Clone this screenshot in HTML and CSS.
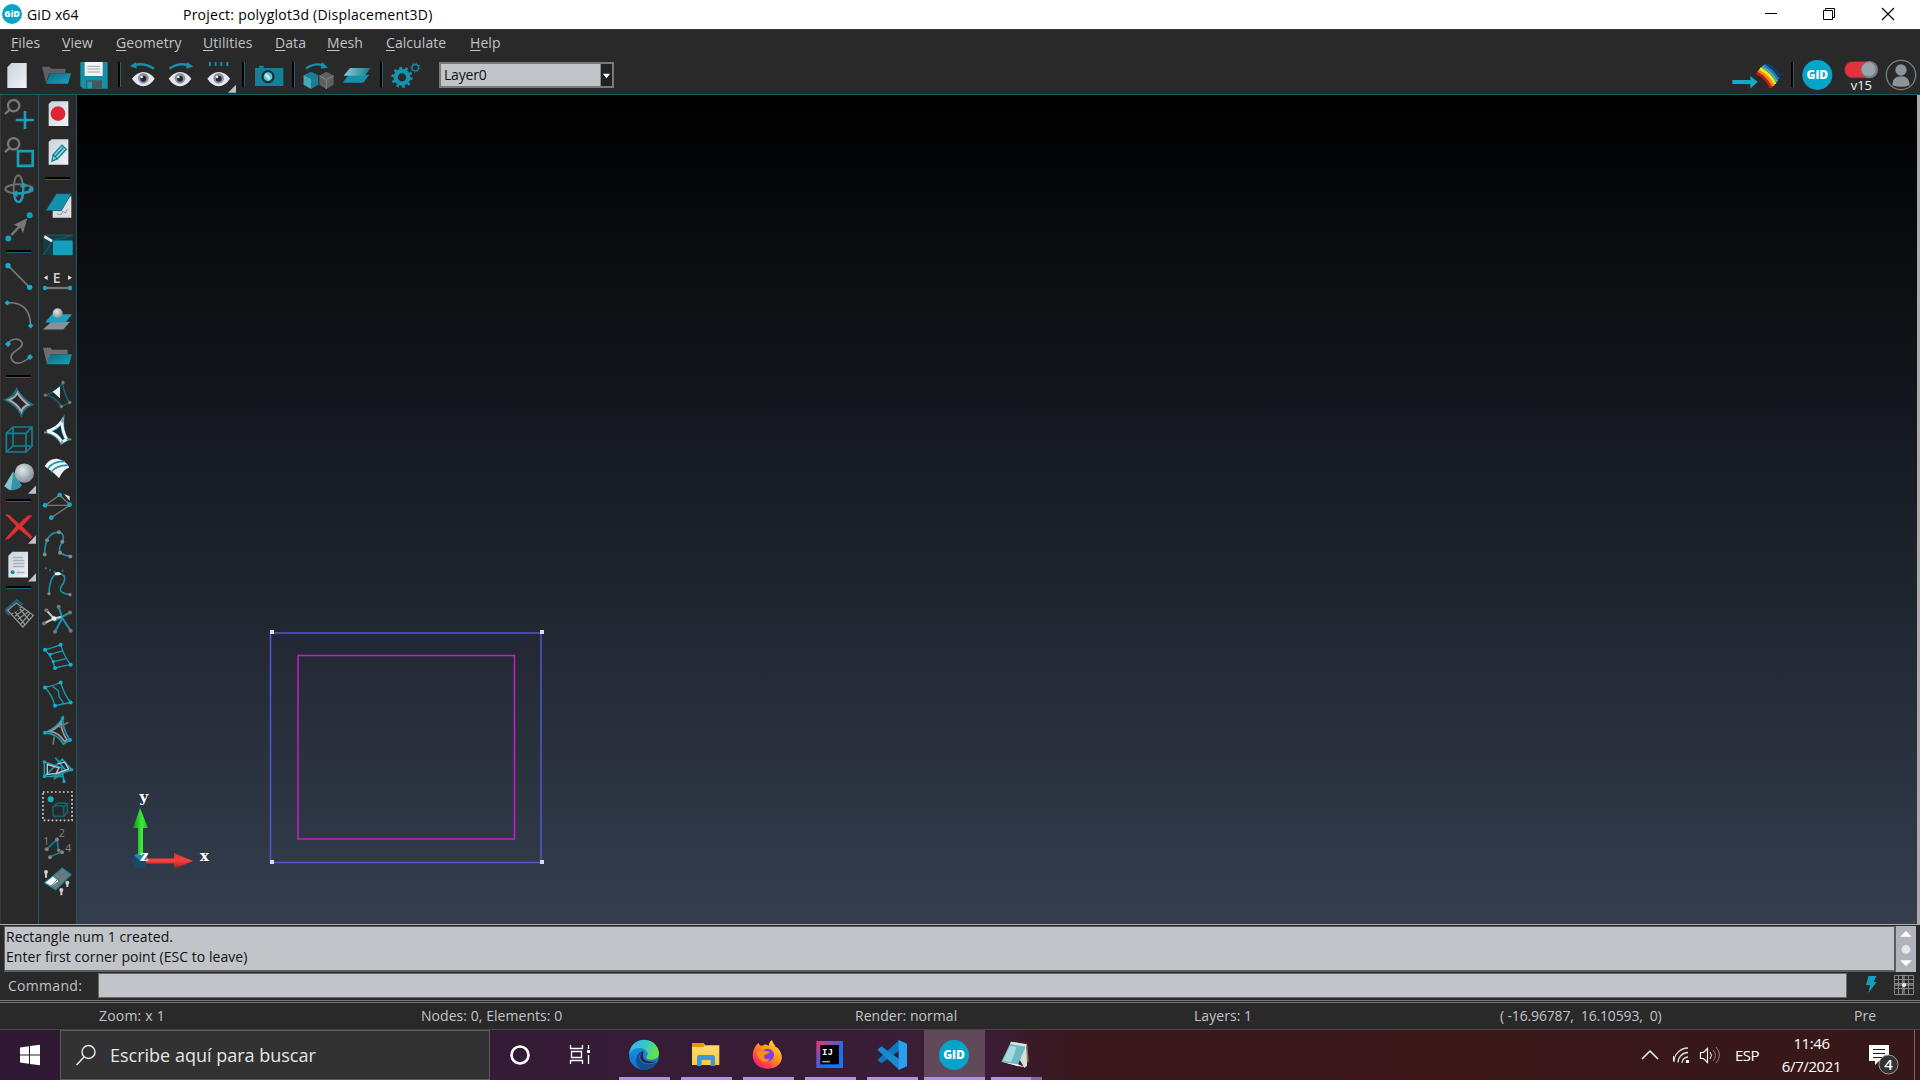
FILE: index.html
```html
<!DOCTYPE html>
<html lang="es">
<head>
<meta charset="utf-8">
<title>GiD x64</title>
<link rel="stylesheet" href="styles.css">
</head>
<body>
<svg class="defs" aria-hidden="true">
  <defs>
    <linearGradient id="paper" x1="0" y1="0" x2="1" y2="1"><stop offset="0" stop-color="#c9d3db"/><stop offset="1" stop-color="#eef3f7"/></linearGradient>
    <linearGradient id="teal" x1="0" y1="0" x2="1" y2="1"><stop offset="0" stop-color="#0b6a80"/><stop offset="1" stop-color="#1aa5c0"/></linearGradient>
    <linearGradient id="tealLight" x1="0" y1="0" x2="1" y2="0"><stop offset="0" stop-color="#8ccfdd"/><stop offset="1" stop-color="#1b7688"/></linearGradient>
    <radialGradient id="ball" cx=".4" cy=".35" r=".7"><stop offset="0" stop-color="#e0e8ec"/><stop offset="1" stop-color="#7f8c92"/></radialGradient>
    <linearGradient id="edgeA" x1="0" y1="0" x2="1" y2=".4"><stop offset="0" stop-color="#2db5ea"/><stop offset=".55" stop-color="#35c8c8"/><stop offset="1" stop-color="#66e04c"/></linearGradient>
    <linearGradient id="edgeB" x1="0" y1="0" x2="0" y2="1"><stop offset="0" stop-color="#199be6"/><stop offset="1" stop-color="#0d6ecb"/></linearGradient>
    <linearGradient id="fold" x1="0" y1="0" x2="0" y2="1"><stop offset="0" stop-color="#ffde72"/><stop offset="1" stop-color="#ffc93c"/></linearGradient>
    <linearGradient id="fox" x1="1" y1="0" x2=".2" y2="1"><stop offset="0" stop-color="#fff04a"/><stop offset=".45" stop-color="#ff9a1f"/><stop offset=".8" stop-color="#ff3f4a"/><stop offset="1" stop-color="#f5156c"/></linearGradient>
    <linearGradient id="ij" x1="0" y1="0" x2="1" y2="1"><stop offset="0" stop-color="#f0356b"/><stop offset=".4" stop-color="#6a55c8"/><stop offset=".6" stop-color="#1470f0"/><stop offset="1" stop-color="#0f7cff"/></linearGradient>
    <linearGradient id="redArrow" x1="0" y1="0" x2="0" y2="1"><stop offset="0" stop-color="#c33"/><stop offset=".45" stop-color="#ff4040"/><stop offset="1" stop-color="#8a1f22"/></linearGradient>
    <linearGradient id="greenArrow" x1="0" y1="0" x2="1" y2="0"><stop offset="0" stop-color="#178a1c"/><stop offset=".6" stop-color="#3cf03c"/><stop offset="1" stop-color="#22b022"/></linearGradient>
    <g id="eye"><path d="M-34 0Q-18-20 0-20Q20-20 34 0Q20 22 0 23Q-20 22-34 0z" fill="#e4e7ef"/><circle r="16" cy="-1" fill="#8b93a0"/><circle r="9" fill="#23272e"/><circle r="4" cx="-5" cy="-5" fill="#eee"/></g>
  </defs>
</svg>

<header class="titlebar">
  <svg class="app-logo" viewBox="0 0 20 20"><circle cx="10" cy="10" r="10" fill="#04a5c8"/><text x="10" y="13" text-anchor="middle" font-size="8.500" class="gid-text">GiD</text></svg>
  <span class="app-name">GiD x64</span>
  <span class="project">Project: polyglot3d (Displacement3D)</span>
  <span class="window-buttons">
    <svg viewBox="1742 0 58 29"><path d="M1765 13.5h12" stroke="#000"/></svg>
    <svg viewBox="1800 0 58 29"><path d="M1823.500 10.500h9v9h-9zM1825.500 10.500v-2h9v9h-2" fill="none" stroke="#000"/></svg>
    <svg viewBox="1858 0 62 29"><path d="M1882 8l12 12M1894 8l-12 12" stroke="#000" stroke-width="1.200"/></svg>
  </span>
</header>

<nav class="menubar">
  <span class="m-files"><u>F</u>iles</span><span class="m-view"><u>V</u>iew</span><span class="m-geometry"><u>G</u>eometry</span><span class="m-utilities"><u>U</u>tilities</span><span class="m-data"><u>D</u>ata</span><span class="m-mesh"><u>M</u>esh</span><span class="m-calculate"><u>C</u>alculate</span><span class="m-help"><u>H</u>elp</span>
</nav>

<div class="toolbar">
  <svg viewBox="0 21 114 108"><path d="M22 52l12-13H80V114H22z" fill="url(#paper)"/></svg>
  <svg viewBox="114 21 114 108"><path d="M126 50h22l6 6h42v14h-48l-10 30z" fill="#5b6064"/><path d="M150 70h63l-9 31h-66z" fill="url(#teal)"/></svg>
  <svg viewBox="228 21 114 108"><path d="M241 36h82v80h-74l-8-8z" fill="#1590a8"/><path d="M254 36h54v42h-54z" fill="#f2f4f5"/><path d="M262 49h38M262 57h38M262 66h38" stroke="#9ba3a8" stroke-width="3"/><path d="M258 91h48v25h-48z" fill="#4b565b"/><path d="M262 95h14v20h-14z" fill="#13a2c0"/></svg>
  <i class="vsep"></i>
  <svg viewBox="372 21 114 108"><path d="M402 46Q430 36 462 56" fill="none" stroke="#1591aa" stroke-width="7"/><path d="M390 48l18-12 2 20z" fill="#1591aa"/><use href="#eye" x="430" y="86"/></svg>
  <svg viewBox="486 21 114 108"><path d="M508 56Q536 36 567 46" fill="none" stroke="#1591aa" stroke-width="7"/><path d="M580 50l-18-14-4 20z" fill="#1591aa"/><use href="#eye" x="540" y="86"/></svg>
  <svg viewBox="600 21 114 108"><path d="M630 36v12M647 36v12M664 36v12M682 36v12" stroke="#1591aa" stroke-width="6"/><use href="#eye" x="656" y="86"/><path d="M708 104v24h-24z" fill="#c0c0c6"/></svg>
  <i class="vsep"></i>
  <svg viewBox="750 21 114 108"><path d="M765 54h12v-7h14v7h59v54h-85z" fill="#158098"/><circle cx="804" cy="80" r="20" fill="#15323b"/><circle cx="804" cy="80" r="13" fill="#69c2d4"/><path d="M797 73l12 14" stroke="#d6f2f7" stroke-width="6"/></svg>
  <i class="vsep"></i>
  <svg viewBox="900 21 114 108"><path d="M918 56Q944 36 972 47" fill="none" stroke="#1591aa" stroke-width="7"/><path d="M984 53l-18-17-4 20z" fill="#1591aa"/><path d="M911 76l22-11 22 11v28l-22 13-22-13z" fill="#1c7d92"/><path d="M911 76l22 12v28l-22-12z" fill="#49a9bc"/><path d="M958 77l21-12 22 12v27l-22 13-21-13z" fill="#5e6063"/><path d="M958 77l21 12 22-12M979 89v28" stroke="#858789" stroke-width="3" fill="none"/></svg>
  <svg viewBox="1014 21 114 108"><path d="M1046 74h62l-18 24h-62z" fill="#1490ab"/><path d="M1050 54h62l-18 23h-63z" fill="url(#tealLight)"/></svg>
  <i class="vsep"></i>
  <svg viewBox="1161 21 114 108"><circle cx="1206" cy="82" r="19" fill="none" stroke="#1593ae" stroke-width="13"/><circle cx="1206" cy="82" r="28" fill="none" stroke="#1593ae" stroke-width="8" stroke-dasharray="8 9.600"/><circle cx="1246" cy="53" r="10" fill="none" stroke="#1780a0" stroke-width="5"/><circle cx="1246" cy="53" r="14" fill="none" stroke="#1780a0" stroke-width="3" stroke-dasharray="4 7"/></svg>
  <div class="combo"><span>Layer0</span><b><svg viewBox="0 0 10 10"><path d="M1 3h8l-4 5z" fill="#fff"/></svg></b></div>
  <div class="toolbar-right">
    <svg class="w54" viewBox="90 171 162 108"><path d="M97 240h54v-12l22 17-22 21v-14H97z" fill="#16a9c6"/><g fill="none" stroke-width="9"><path d="M170 218q30 15 44 46" stroke="#c61a15"/><path d="M175 211q30 16 45 47" stroke="#f78b12"/><path d="M180 205q31 17 46 47" stroke="#f5e426"/><path d="M187 199q30 18 44 46" stroke="#49b9a4"/><path d="M193 195q28 17 42 43" stroke="#1c79bd"/><path d="M200 191q26 16 39 40" stroke="#123a66"/></g></svg>
    <i class="vsep"></i>
    <svg class="w34" viewBox="300 171 102 108"><circle cx="352" cy="225" r="45" fill="#04a5c8"/><text x="352" y="238" text-anchor="middle" font-size="36" class="gid-text">GiD</text></svg>
    <svg class="w38" viewBox="426 171 114 108"><rect x="433" y="184" width="102" height="51" rx="25" fill="#6b3c40"/><rect x="435" y="186" width="90" height="46" rx="23" fill="#e5313b"/><circle cx="508" cy="209" r="26" fill="#737c83"/><circle cx="506" cy="208" r="21" fill="#9aa4ac"/><text x="484" y="269" text-anchor="middle" class="version">v15</text></svg>
    <svg class="w34" viewBox="552 171 102 108"><circle cx="603" cy="225" r="44" fill="none" stroke="#777e83" stroke-width="4"/><circle cx="603" cy="210" r="17" fill="#8b959c"/><path d="M577 256q0-27 26-27t26 27q-26 9-52 0z" fill="#8b959c"/></svg>
  </div>
</div>

<main class="workspace">
  <aside class="tools">
    <svg viewBox="0 18 114 112.500"><circle cx="41" cy="47" r="17" fill="none" stroke="#777" stroke-width="7"/><path d="M29 59L15 72" stroke="#777" stroke-width="7"/><path d="M47 90h55M75 63v54" stroke="#169fbb" stroke-width="8"/></svg>
    <svg viewBox="0 130.500 114 112.500"><circle cx="41" cy="160" r="17" fill="none" stroke="#777" stroke-width="7"/><path d="M29 172L15 185" stroke="#777" stroke-width="7"/><path d="M54 182h44v44H54z" fill="none" stroke="#169fbb" stroke-width="8"/></svg>
    <svg viewBox="0 243 114 112.500"><g fill="none" stroke-width="6"><ellipse cx="57" cy="297" rx="41" ry="14" stroke="#6b6f71"/><ellipse cx="55" cy="296" rx="14" ry="40" stroke="#6b6f71"/><path d="M98 294q-3 14-54 17M70 290q2 46-15 46q-10 0-12-20" stroke="#169fbb"/></g><path d="M36 311l16-11v22zM70 277l-11 15h22zM100 306l-2-18-14 10z" fill="#169fbb"/></svg>
    <svg viewBox="0 355.500 114 112.500"><path d="M34 434l28-30" stroke="#777" stroke-width="7"/><path d="M82 383l-41 20 20 8 8 17z" fill="#777"/><circle cx="25" cy="444" r="9" fill="#169fbb"/><circle cx="89" cy="374" r="9" fill="#169fbb"/></svg>
    <i class="hsep s12"></i>
    <svg viewBox="0 504 114 112.500"><path d="M24 527l65 65" stroke="#777" stroke-width="5"/><circle cx="24" cy="527" r="8" fill="#16b0cf"/><circle cx="89" cy="592" r="8" fill="#16b0cf"/></svg>
    <svg viewBox="0 16.500 114 112.500"><path d="M22 37q68-4 70 69" fill="none" stroke="#777" stroke-width="5"/><path d="M22 29l8 8-8 8-8-8zM92 98l8 8-8 8-8-8z" fill="#16b0cf"/></svg>
    <svg viewBox="0 129 114 112.500"><path d="M24 162C34 142 60 145 66 158C73 177 26 184 34 205C43 230 70 219 90 201" fill="none" stroke="#777" stroke-width="5"/><path d="M24 153l9 9-9 9-9-9zM90 192l9 9-9 9-9-9z" fill="#16b0cf"/></svg>
    <i class="hsep s12"></i>
    <svg viewBox="0 277.500 114 112.500"><path d="M16 328q24-8 34-32q16 28 46 46q-24 8-32 31q-12-30-48-45z" fill="none" stroke="#15788c" stroke-width="6"/><path d="M27 328q18-6 25-21q15 23 33 35q-16 6-21 20q-12-22-37-34z" fill="none" stroke="#b7a5a6" stroke-width="6"/></svg>
    <svg viewBox="0 390 114 112.500"><path d="M19 430h59v56H19zM39 411h57v57H39zM19 430l20-19M78 430l18-19M19 486l20-18M78 486l18-18" fill="none" stroke="#177f94" stroke-width="5"/></svg>
    <svg viewBox="0 502.500 114 112.500"><path d="M40 543l26 42q-12 16-39 14l-14-12z" fill="#3593a7"/><path d="M40 543l-27 44 20 12z" fill="#8ac3cf"/><circle cx="73" cy="548" r="29" fill="url(#ball)"/><path d="M108 585v25H84z" fill="#c0c0c6"/></svg>
    <i class="hsep s12"></i>
    <svg viewBox="0 51 114 112.500"><path d="M18 74l10 2 29 27 26-25 12-1-30 32 30 30-3 6-35-29-31 30-9 1 33-39z" fill="#dc2f36" stroke="#dc2f36" stroke-width="3"/><path d="M108 136v25H84z" fill="#c0c0c6"/></svg>
    <svg viewBox="0 163.500 114 112.500"><path d="M25 196l12-12h47v77H25z" fill="url(#paper)"/><path d="M39 201h31M39 210h34M39 219h34M39 228h34M50 246h23" stroke="#a9b2b8" stroke-width="4"/><circle cx="38" cy="245" r="6" fill="#138ca8"/><path d="M108 248v25H84z" fill="#c0c0c6"/></svg>
    <i class="hsep s12"></i>
    <svg viewBox="0 312 114 112.500"><path d="M16 361l34-31 18 14M16 361l12 14" fill="none" stroke="#166679" stroke-width="6"/><path d="M23 361l26-22 51 37-31 35zM36 371l30-21M45 379l30-23M54 388l33-24M63 401l27-31M39 357l35 46M55 351l34 41" fill="none" stroke="#919495" stroke-width="4"/><path d="M28 361l20-16 14 10-22 15z" fill="#292929"/></svg>
  </aside>
  <aside class="tools second">
    <svg viewBox="117 18 114 112.500"><path d="M146 42l9-8h50v74h-59z" fill="url(#paper)"/><circle cx="174" cy="71" r="22" fill="#dd2634"/></svg>
    <svg viewBox="117 130.500 114 112.500"><path d="M146 154l9-8h50v77h-59z" fill="url(#paper)"/><path d="M156 212l3-19 27-29 13 12-27 29zM160 193l11 11M166 197l24-25" fill="#8fcfdd" stroke="#12829b" stroke-width="4"/></svg>
    <i class="hsep s16"></i>
    <svg viewBox="117 291 114 112.500"><path d="M158 341l56-23v65h-56z" fill="#d9dfe5"/><path d="M171 372l12 2 5-10 8 5 6-11" fill="none" stroke="#8b959d" stroke-width="3"/><path d="M169 311h45l-30 51h-47z" fill="#1590aa" stroke="#0a4856" stroke-width="2"/></svg>
    <svg viewBox="117 403.500 114 112.500"><path d="M130 434h88v60h-88z" fill="#173c45"/><path d="M159 450h59v44h-59z" fill="#13a0bd"/><path d="M130 434h88M159 450l59-16M130 494l29-44" stroke="#18606f" stroke-width="3"/><path d="M133 438l23 14" stroke="#e8ecee" stroke-width="8"/></svg>
    <svg viewBox="117 516 114 112.500"><path d="M131 563l12-7v14zM216 563l-12-7v14z" fill="#ddd"/><text x="170" y="578" text-anchor="middle" class="icon-letter">E</text><path d="M135 594h75" stroke="#777" stroke-width="7"/><circle cx="135" cy="594" r="7" fill="#16a5c2"/><circle cx="210" cy="594" r="7" fill="#16a5c2"/></svg>
    <svg viewBox="117 28.500 114 112.500"><path d="M154 94h56l-20 23h-61z" fill="#8a9196"/><path d="M156 71h60l-20 25h-61z" fill="#18a3bf"/><circle cx="173" cy="68" r="15" fill="url(#ball)"/></svg>
    <svg viewBox="117 141 114 112.500"><path d="M129 173h22l6 6h46v14h-50l-12 29z" fill="#6b6f71"/><path d="M151 193h65l-9 30h-67z" fill="url(#teal)"/></svg>
    <svg viewBox="117 253.500 114 112.500"><path d="M136 314q36-10 53-38q0 30 20 60l-25 12q-18-30-48-34z" fill="none" stroke="#16687a" stroke-width="4"/><path d="M158 304l22-16v35z" fill="#e4f6fa"/><g fill="#747879"><circle cx="136" cy="314" r="5"/><circle cx="189" cy="276" r="5"/><circle cx="209" cy="336" r="5"/><circle cx="184" cy="348" r="5"/></g></svg>
    <svg viewBox="117 366 114 112.500"><path d="M140 425q30-6 47-32q-2 32 14 55l-17 9q-14-26-44-32z" fill="#172d33" stroke="#2996aa" stroke-width="11"/><path d="M142 424q28-8 44-30q0 30 14 54l-14 8q-14-26-44-32z" fill="none" stroke="#f4f7f8" stroke-width="8"/><path d="M132 427h10M188 386l-2 12M200 448h14M184 464l3-12" stroke="#888" stroke-width="5"/></svg>
    <svg viewBox="117 478.500 114 112.500"><path d="M134 527q14-23 36-22q26 3 38 26q-17 4-31 32q-14-16-43-36z" fill="#f1f5f6"/><path d="M143 535q17-24 52-22M153 545q17-21 50-21" fill="none" stroke="#2197ae" stroke-width="5"/></svg>
    <svg viewBox="117 -9 114 112.500"><path d="M135 46h74l-55 37M135 46l44-31M179 15l30 29" fill="none" stroke="#777" stroke-width="4"/><path d="M192 12l17 7v14z" fill="#e5e5e5"/><g fill="#16a8c6"><circle cx="135" cy="46" r="7"/><circle cx="209" cy="44" r="7"/><circle cx="154" cy="83" r="7"/><circle cx="179" cy="15" r="7"/></g></svg>
    <svg viewBox="117 103.500 114 112.500"><path d="M134 192q0-66 43-67q20 5 10 29q-25 38 23 43" fill="none" stroke="#1591aa" stroke-width="5"/><g fill="#84888a"><circle cx="134" cy="192" r="6"/><circle cx="141" cy="149" r="6"/><circle cx="177" cy="125" r="6"/><circle cx="187" cy="154" r="6"/><circle cx="180" cy="187" r="6"/><circle cx="211" cy="198" r="6"/></g></svg>
    <svg viewBox="117 216 114 112.500"><path d="M147 311q2-58 28-60q28 2 15 29q-25 28 20 34" fill="none" stroke="#1591aa" stroke-width="5"/><path d="M135 234l40 16 23-14" fill="none" stroke="#1591aa" stroke-width="5" stroke-dasharray="5 9"/><ellipse cx="173" cy="251" rx="9" ry="5" fill="#eee"/><circle cx="147" cy="311" r="5" fill="#84888a"/><circle cx="210" cy="314" r="5" fill="#84888a"/></svg>
    <svg viewBox="117 328.500 114 112.500"><path d="M162 392l48-26M176 349l11 34 25 38M187 382l-22 42" stroke="#1591aa" stroke-width="6" fill="none"/><path d="M139 359l23 25-30 15M162 384l22-5" stroke="#c7c9ca" stroke-width="6" fill="none"/><g fill="#777"><circle cx="139" cy="359" r="6"/><circle cx="176" cy="349" r="6"/><circle cx="132" cy="399" r="6"/><circle cx="210" cy="366" r="6"/><circle cx="212" cy="421" r="6"/><circle cx="165" cy="424" r="6"/></g><circle cx="162" cy="384" r="7" fill="#eee"/></svg>
    <svg viewBox="117 441 114 112.500"><path d="M135 479q25-5 47-15q10 35 30 60q-24 4-47 10q-8-32-30-55zM151 493l39-11M160 515l42-10" fill="none" stroke="#169bb5" stroke-width="4"/><g fill="#16b0cf"><circle cx="135" cy="479" r="6"/><circle cx="182" cy="464" r="6"/><circle cx="212" cy="524" r="6"/><circle cx="165" cy="534" r="6"/><circle cx="151" cy="493" r="5"/><circle cx="160" cy="515" r="5"/></g></svg>
    <svg viewBox="117 553.500 114 112.500"><path d="M135 591q25-5 47-15q10 35 30 60q-24 4-47 10q-8-32-30-55zM158 588l17 12 2 18 14 21" fill="none" stroke="#169bb5" stroke-width="4"/><g fill="#16b0cf"><circle cx="135" cy="591" r="6"/><circle cx="182" cy="576" r="6"/><circle cx="212" cy="636" r="6"/><circle cx="165" cy="646" r="6"/></g></svg>
    <svg viewBox="117 66 114 112.500"><path d="M135 128q34-12 53-44q0 36 22 66l-20 12q-16-30-55-34z" fill="none" stroke="#169bb5" stroke-width="5"/><path d="M150 124q22-10 33-26q2 30 18 51l-8 5q-16-26-43-30z" fill="none" stroke="#989a9b" stroke-width="5"/><path d="M177 112l28-15M163 140l-4 24" fill="none" stroke="#777" stroke-width="5"/><g fill="#16a8c6"><circle cx="135" cy="128" r="6"/><circle cx="188" cy="84" r="5"/><circle cx="210" cy="150" r="6"/></g></svg>
    <svg viewBox="117 178.500 114 112.500"><path d="M133 214l52 18 7 41M133 258l54-52 28 32-61 20M166 202l33 40-38 24M133 214v44h58" fill="none" stroke="#159ab4" stroke-width="5"/><path d="M142 222l35 10-9 17-26 3zM174 220l20-5 12 21-38 13" fill="none" stroke="#c2c3c4" stroke-width="4"/><g fill="#16a8c6"><circle cx="133" cy="214" r="5"/><circle cx="133" cy="258" r="5"/><circle cx="192" cy="273" r="5"/><circle cx="215" cy="238" r="5"/></g></svg>
    <svg viewBox="117 291 114 112.500"><path d="M129 306h87v85h-87z" fill="none" stroke="#cfcfcf" stroke-width="5" stroke-dasharray="5 7"/><circle cx="152" cy="328" r="9" fill="#16b0cf"/><path d="M158 351q18-7 33-1v29h-31zM158 351l14-11q16-4 30 2l-11 8M202 342v26l-11 11" fill="none" stroke="#13606f" stroke-width="5"/></svg>
    <svg viewBox="117 403.500 114 112.500"><g class="icon-digits"><text x="130" y="463">1</text><text x="176" y="440">2</text><text x="196" y="485">4</text></g><path d="M140 476l31-29 5 35M150 499l36-15" fill="none" stroke="#147d93" stroke-width="5"/><g fill="#808384"><circle cx="140" cy="476" r="6"/><circle cx="171" cy="447" r="6"/><circle cx="176" cy="479" r="5"/><circle cx="150" cy="500" r="6"/><circle cx="186" cy="485" r="6"/></g></svg>
    <svg viewBox="117 516 114 112.500"><path d="M134 578l53-43 26 19-46 45z" fill="#777" stroke="#17879e" stroke-width="4"/><path d="M136 578l24-19 15 14-21 15z" fill="#fff"/><path d="M150 590l48-46M160 559l26 20" stroke="#17879e" stroke-width="3"/><path d="M138 563v-18M184 616v-18M202 591v-16" stroke="#ccc" stroke-width="6"/><circle cx="138" cy="546" r="6" fill="#ccc"/><circle cx="184" cy="600" r="6" fill="#ccc"/><circle cx="202" cy="578" r="6" fill="#ccc"/></svg>
  </aside>
  <section class="canvas">
    <svg viewBox="78 95 1839 829">
      <path d="M270.500 633H541V862.500H270.500z" fill="none" stroke="#5058cf" stroke-width="1.500"/>
      <path d="M298 655.500H514.500V839H298z" fill="none" stroke="#c41fc8" stroke-width="1.500"/>
      <path d="M270 630h4v4h-4zM540 630h4v4h-4zM270 860h4v4h-4zM540 860h4v4h-4z" fill="#dedede"/>
      <circle cx="140" cy="861" r="7.500" fill="#174a66"/>
      <path d="M140 861l-6-6 6-2h7v8z" fill="#2485b5"/>
      <path d="M138 827h5v28h-5zM133 828l7-20 8 20z" fill="url(#greenArrow)"/>
      <path d="M146 858.500h28v5h-28zM174 853l19 8-19 8z" fill="url(#redArrow)"/>
      <g class="axis"><text x="139.500" y="802">y</text><text x="200" y="861">x</text><text x="140" y="861">z</text></g>
    </svg>
  </section>
</main>

<section class="messages">
  <div class="log"><p class="l1">Rectangle num 1 created.</p><p class="l2">Enter first corner point (ESC to leave)</p></div>
  <svg class="scroll" viewBox="0 0 20 47"><path d="M10 5l6 6H4zM10 41l6-6H4z" fill="#fff"/><circle cx="10" cy="24" r="4.500" fill="#e4e8ec"/></svg>
</section>
<section class="command">
  <span>Command:</span><div class="input"></div>
  <svg viewBox="1850 972 70 27"><path d="M1868.500 976h8l-3 6h3l-8 11 1.500-8h-4z" fill="#14a0bd"/><path d="M1894.500 975.500h19v19h-19zM1898.500 976v18M1902.500 976v18M1908.500 976v18M1895 979.500h18M1895 983.500h18M1895 988.500h18" fill="none" stroke="#858585"/><path d="M1904 975v19M1895 985h18" stroke="#a5a5a5"/><circle cx="1904" cy="985" r="2" fill="#eee"/></svg>
</section>
<section class="status">
  <span class="s1">Zoom: x 1</span><span class="s2">Nodes: 0, Elements: 0</span><span class="s3">Render: normal</span><span class="s4">Layers: 1</span><span class="s5">( -16.96787,&nbsp; 16.10593,&nbsp; 0)</span><span class="s6">Pre</span>
</section>

<footer class="taskbar">
  <svg class="start" viewBox="0 1030 60 50"><path d="M20 1047.500l9-1.300v8.300h-9zM30 1046l10-1.300v9.800H30zM20 1055.500h9v8.300l-9-1.300zM30 1055.500h10v9.800L30 1064z" fill="#fff"/></svg>
  <div class="search"><svg viewBox="0 0 24 24"><circle cx="14.500" cy="9" r="6.500" fill="none" stroke="#eee" stroke-width="1.400"/><path d="M10 14l-7.500 8" stroke="#eee" stroke-width="1.400"/></svg><span>Escribe aquí para buscar</span></div>
  <svg class="cortana" viewBox="490 1030 60 50"><circle cx="520" cy="1055" r="8.500" fill="none" stroke="#fff" stroke-width="2.600"/></svg>
  <svg class="taskview" viewBox="550 1030 63 50"><path d="M570.500 1045v3.500h12V1045M570.500 1064v-3.500h12v3.500M571.500 1051.500h10v6h-10zM588.500 1045v4M588.500 1055v9" fill="none" stroke="#fff" stroke-width="1.300"/><path d="M587 1050h3v3h-3z" fill="#fff"/></svg>
  <div class="app"><svg viewBox="39 12 186 141"><circle cx="132" cy="87" r="45" fill="url(#edgeB)"/><path d="M87 88C90 25 174 28 177 82Q177 100 155 101Q137 101 139 92Q149 82 136 72C118 58 91 70 87 88z" fill="url(#edgeA)"/><path d="M129 74Q107 96 129 111Q150 120 171 109Q155 134 130 132Q98 118 113 86Q119 76 129 74z" fill="#134f92"/><path d="M131 76q-8 24 10 29 14 4 29 1-20 10-40 2-16-10-5-30z" fill="#381d36"/></svg></div>
  <div class="app"><svg viewBox="225 12 186 141"><path d="M276 51h34l6 7h42v59h-82z" fill="url(#fold)"/><path d="M276 51h34l5 6-5 6h-34z" fill="#e19a09"/><path d="M291 120V94q0-7 7-7h40q7 0 7 7v26h-13v-18h-27v18z" fill="#3b98df"/></svg></div>
  <div class="app"><svg viewBox="411 12 186 141"><path d="M503 128c-54-2-54-57-27-77 2 7 6 9 11 8 7-5 14-4 19 2 0-10 7-18 10-18 6 15 10 15 10 19 6 1 9 6 9 6 25 30 2 62-32 60z" fill="url(#fox)"/><circle cx="503" cy="87" r="19" fill="#7841df"/><path d="M471 75q15-5 27 1 12-1 11 4-10 5-16 8-4 14 18 10-17 20-34 0-7-10-6-23z" fill="#ff8a1e"/></svg></div>
  <div class="app"><svg viewBox="597 12 186 141"><path d="M649 45h80v81h-80z" fill="url(#ij)"/><path d="M661 57h56v58h-56z" fill="#000"/><text x="666" y="87" class="ij">IJ</text><path d="M667 107h23" stroke="#999" stroke-width="5"/></svg></div>
  <div class="app"><svg viewBox="783 12 186 141"><path d="M898 42v32l-54 38-12-10z" fill="#0c79bf"/><path d="M832 71l12-10 54 39v32z" fill="#168bd0"/><path d="M896 42l25 11v68l-25 11z" fill="#2b9fee"/></svg></div>
  <div class="app active"><svg viewBox="969 12 186 141"><circle cx="1062" cy="87" r="45" fill="#04a5c8"/><text x="1062" y="100" text-anchor="middle" font-size="36" class="gid-text">GiD</text></svg></div>
  <div class="app multi"><svg viewBox="1155 12 186 141"><path d="M1282 52l4 52-12 20z" fill="#8f7442"/><path d="M1256 96l23-44 2 67-8 7z" fill="#d7dfe0"/><path d="M1233 47l47 8-26 61-50-9z" fill="#6fb9c4"/><path d="M1233 47l47 8-2 7-47-8z" fill="#dce2e3"/><path d="M1230 60l20 2-16 46-25-4z" fill="#a6dbe3"/><path d="M1204 107l50 8 21 8-24-3z" fill="#edf4f4"/></svg></div>
  <div class="tray">
    <svg viewBox="1636 1030 92 50"><path d="M1642 1059l8-8 8 8" fill="none" stroke="#fff" stroke-width="1.500"/><path d="M1674 1062a14 14 0 0 1 14-14M1678 1062.500a10 10 0 0 1 10-10M1682 1063a6 6 0 0 1 6-6" fill="none" stroke="#ddd" stroke-width="1.300"/><path d="M1686 1060h3v3h-3zM1673 1056h1v5h-1z" fill="#fff"/><path d="M1700.500 1052.500h3l4-4v14l-4-4h-3z" fill="none" stroke="#fff" stroke-width="1.200"/><path d="M1710 1052q3 3 0 7" fill="none" stroke="#fff"/><path d="M1713 1050q5 5.500 0 11M1716 1047q7 8 0 16" fill="none" stroke="#96797a"/></svg>
    <span class="lang">ESP</span>
    <div class="clock"><span class="time">11:46</span><span class="date">6/7/2021</span></div>
    <svg class="notify" viewBox="1860 1030 54 50"><path d="M1869 1045h20v16h-10l-4 4v-4h-6z" fill="#fff"/><path d="M1873 1049.500h12M1873 1053.500h12M1873 1057.500h12" stroke="#3c1819"/><circle cx="1888.500" cy="1064.500" r="9.500" fill="#333" stroke="#9a9a9a"/><text x="1888.500" y="1069.500" text-anchor="middle" class="badge">4</text></svg>
    <i class="peek"></i>
  </div>
</footer>
</body>
</html>
```
FILE: styles.css
```css
* { box-sizing: border-box; }
body { margin: 0; width: 1920px; height: 1080px; overflow: hidden; background: #292929; color: #c1c3c8; font: 14px/20px "Open Sans", "Noto Sans", sans-serif; display: flex; flex-direction: column; }
svg { display: block; flex: none; }
.defs { width: 0; height: 0; position: absolute; }
span, p { white-space: pre; }
.gid-text { font-family: "Open Sans", sans-serif; font-weight: 800; fill: #fff; }

.titlebar { height: 29px; flex: none; background: #fff; color: #000; display: flex; align-items: center; padding-left: 2px; }
.app-logo { width: 20px; height: 20px; margin-top: -1px; }
.app-name { width: 156px; padding-left: 5px; letter-spacing: .1px; }
.project { padding-left: 5px; letter-spacing: .24px; }
.window-buttons { margin-left: auto; display: flex; }
.window-buttons svg { width: 58px; height: 29px; }
.window-buttons svg:last-child { width: 62px; }

.menubar { height: 28px; flex: none; border-top: 1px solid #3b3b3b; padding-left: 11px; display: flex; line-height: 25px; letter-spacing: .07px; }
.menubar u { text-underline-offset: 2px; }
.m-files { width: 51px; } .m-view { width: 54px; } .m-geometry { width: 87px; } .m-utilities { width: 72px; }
.m-data { width: 52px; } .m-mesh { width: 59px; } .m-calculate { width: 84px; }

.toolbar { height: 38px; flex: none; border-bottom: 1px solid #1a5a6a; display: flex; align-items: flex-start; }
.toolbar > svg { width: 38px; height: 36px; }
.vsep { flex: none; width: 3px; height: 25px; margin: 5px 4px 0 5px; background: #000; border-right: 1px solid #1c6375; }
.toolbar > svg + .vsep { margin-left: 4px; margin-right: 5px; }
.toolbar > svg:nth-child(3) + .vsep { margin-right: 3px; }
.toolbar > svg:nth-child(12) + .vsep { margin-right: 4px; }
.combo { width: 175px; height: 26px; margin: 5px 0 0 14px; border: 2px solid #77797c; background: #c1c4c9; color: #111; display: flex; justify-content: space-between; line-height: 21px; padding-left: 3px; letter-spacing: -.2px; }
.combo b { width: 12px; background: #222; border-left: 1px solid #888; display: flex; align-items: center; justify-content: center; }
.combo svg { width: 9px; height: 9px; }
.toolbar-right { margin-left: auto; display: flex; padding-right: 2px; }
.toolbar-right svg { height: 36px; }
.toolbar-right .vsep { margin: 5px 6px 0 7px; }
.w54 { width: 54px; } .w34 { width: 34px; } .w38 { width: 38px; margin: 0 4px 0 8px; }
.version { font: 500 39px "Open Sans", sans-serif; fill: #f2f2f2; }

.workspace { height: 829px; flex: none; display: flex; }
.tools { width: 39px; flex: none; border-right: 1px solid #1b5969; border-left: 1px solid #3a3a3a; padding-top: 1px; display: flex; flex-direction: column; }
.tools svg { width: 38px; height: 37.5px; margin-left: -1px; }
.tools.second { width: 38px; border-left: 0; }
.tools.second svg { margin-left: 0; }
.hsep { flex: none; width: 25px; height: 3px; background: #000; border-bottom: 1px solid #1c6375; margin-left: 5px; }
.s12 { margin-top: 4px; margin-bottom: 5px; }
.s16 { margin-top: 6px; margin-bottom: 7px; margin-left: 6px; }
.icon-letter { font: 600 42px "Open Sans", sans-serif; fill: #d0d0d0; }
.icon-digits { font: 32px "Open Sans", sans-serif; fill: #858585; }
.canvas { width: 1843px; padding-left: 1px; border-right: 3px solid #a9a9ac; background: linear-gradient(#000, #343e4e); }
.canvas svg { width: 1839px; height: 829px; }
.axis { font: bold 15px "DejaVu Serif", "Liberation Serif", serif; fill: #fff; }

.messages { height: 48px; flex: none; border-top: 1px solid #aaa; padding: 1px 4px 0 4px; display: flex; }
.log { flex: 1; border: 1px solid #5c5d60; border-right-width: 2px; border-bottom-width: 2px; background: #c1c4c9; color: #111; padding: 0 1px; }
.log p { margin: 0; letter-spacing: .05px; }
.scroll { width: 20px; height: 46px; background: #b0b3ba; }
.command { height: 27px; flex: none; display: flex; align-items: center; padding-left: 8px; letter-spacing: .3px; }
.command > span { width: 90px; }
.input { width: 1749px; height: 25px; background: #c1c4c9; border: 1px solid #686868; margin-right: 3px; }
.command svg { width: 70px; height: 27px; }
.status { height: 30px; flex: none; border-top: 3px double #777; border-bottom: 1px solid #474747; display: flex; line-height: 25px; padding: 0 0 0 99px; letter-spacing: .05px; margin-top: 1px; }
.s1 { width: 322px; letter-spacing: .2px; } .s2 { width: 434px; } .s3 { width: 339px; } .s4 { width: 306px; } .s5 { width: 354px; letter-spacing: -.15px; }

.taskbar { height: 50px; flex: none; display: flex; background: linear-gradient(90deg, #2f1833, #391d37 45%, #3b1c36 51%, #3a181e 56%, #3c1819 75%, #361718); color: #fff; }
.start { width: 60px; height: 50px; }
.search { width: 430px; flex: none; background: #323232; border: 1px solid #5b5b5b; display: flex; align-items: center; padding-left: 13px; font-size: 18px; letter-spacing: 0; color: #e6e6e6; }
.search svg { width: 24px; height: 24px; margin-right: 12px; }
.cortana { width: 60px; height: 50px; }
.taskview { width: 63px; height: 50px; }
.app { width: 62px; flex: none; padding: 0 5px 0 6px; display: flex; flex-direction: column; align-items: center; }
.app svg { width: 62px; height: 47px; margin-right: 1px; }
.app::after { content: ""; width: 51px; height: 3px; background: #b48fe0; }
.active { background: #61495a; width: 61px; margin-left: 1px; padding: 0; }
.active::after { width: 61px; }
.multi::after { background: linear-gradient(90deg, #b48fe0 40px, #846aa3 40px); }
.ij { font: bold 27px "Liberation Mono", monospace; fill: #fff; }
.tray { margin-left: auto; display: flex; }
.tray > svg { width: 92px; height: 50px; }
.lang { width: 43px; line-height: 50px; padding-left: 7px; font-size: 15px; letter-spacing: -.5px; }
.clock { width: 89px; padding-right: 8px; display: flex; flex-direction: column; align-items: center; padding-top: 2px; line-height: 23px; font-size: 15px; letter-spacing: -.4px; }
.tray > .notify { width: 54px; }
.badge { font: 600 15px "Open Sans", sans-serif; fill: #fff; }
.peek { width: 6px; border-left: 1px solid #7d6667; }
```
